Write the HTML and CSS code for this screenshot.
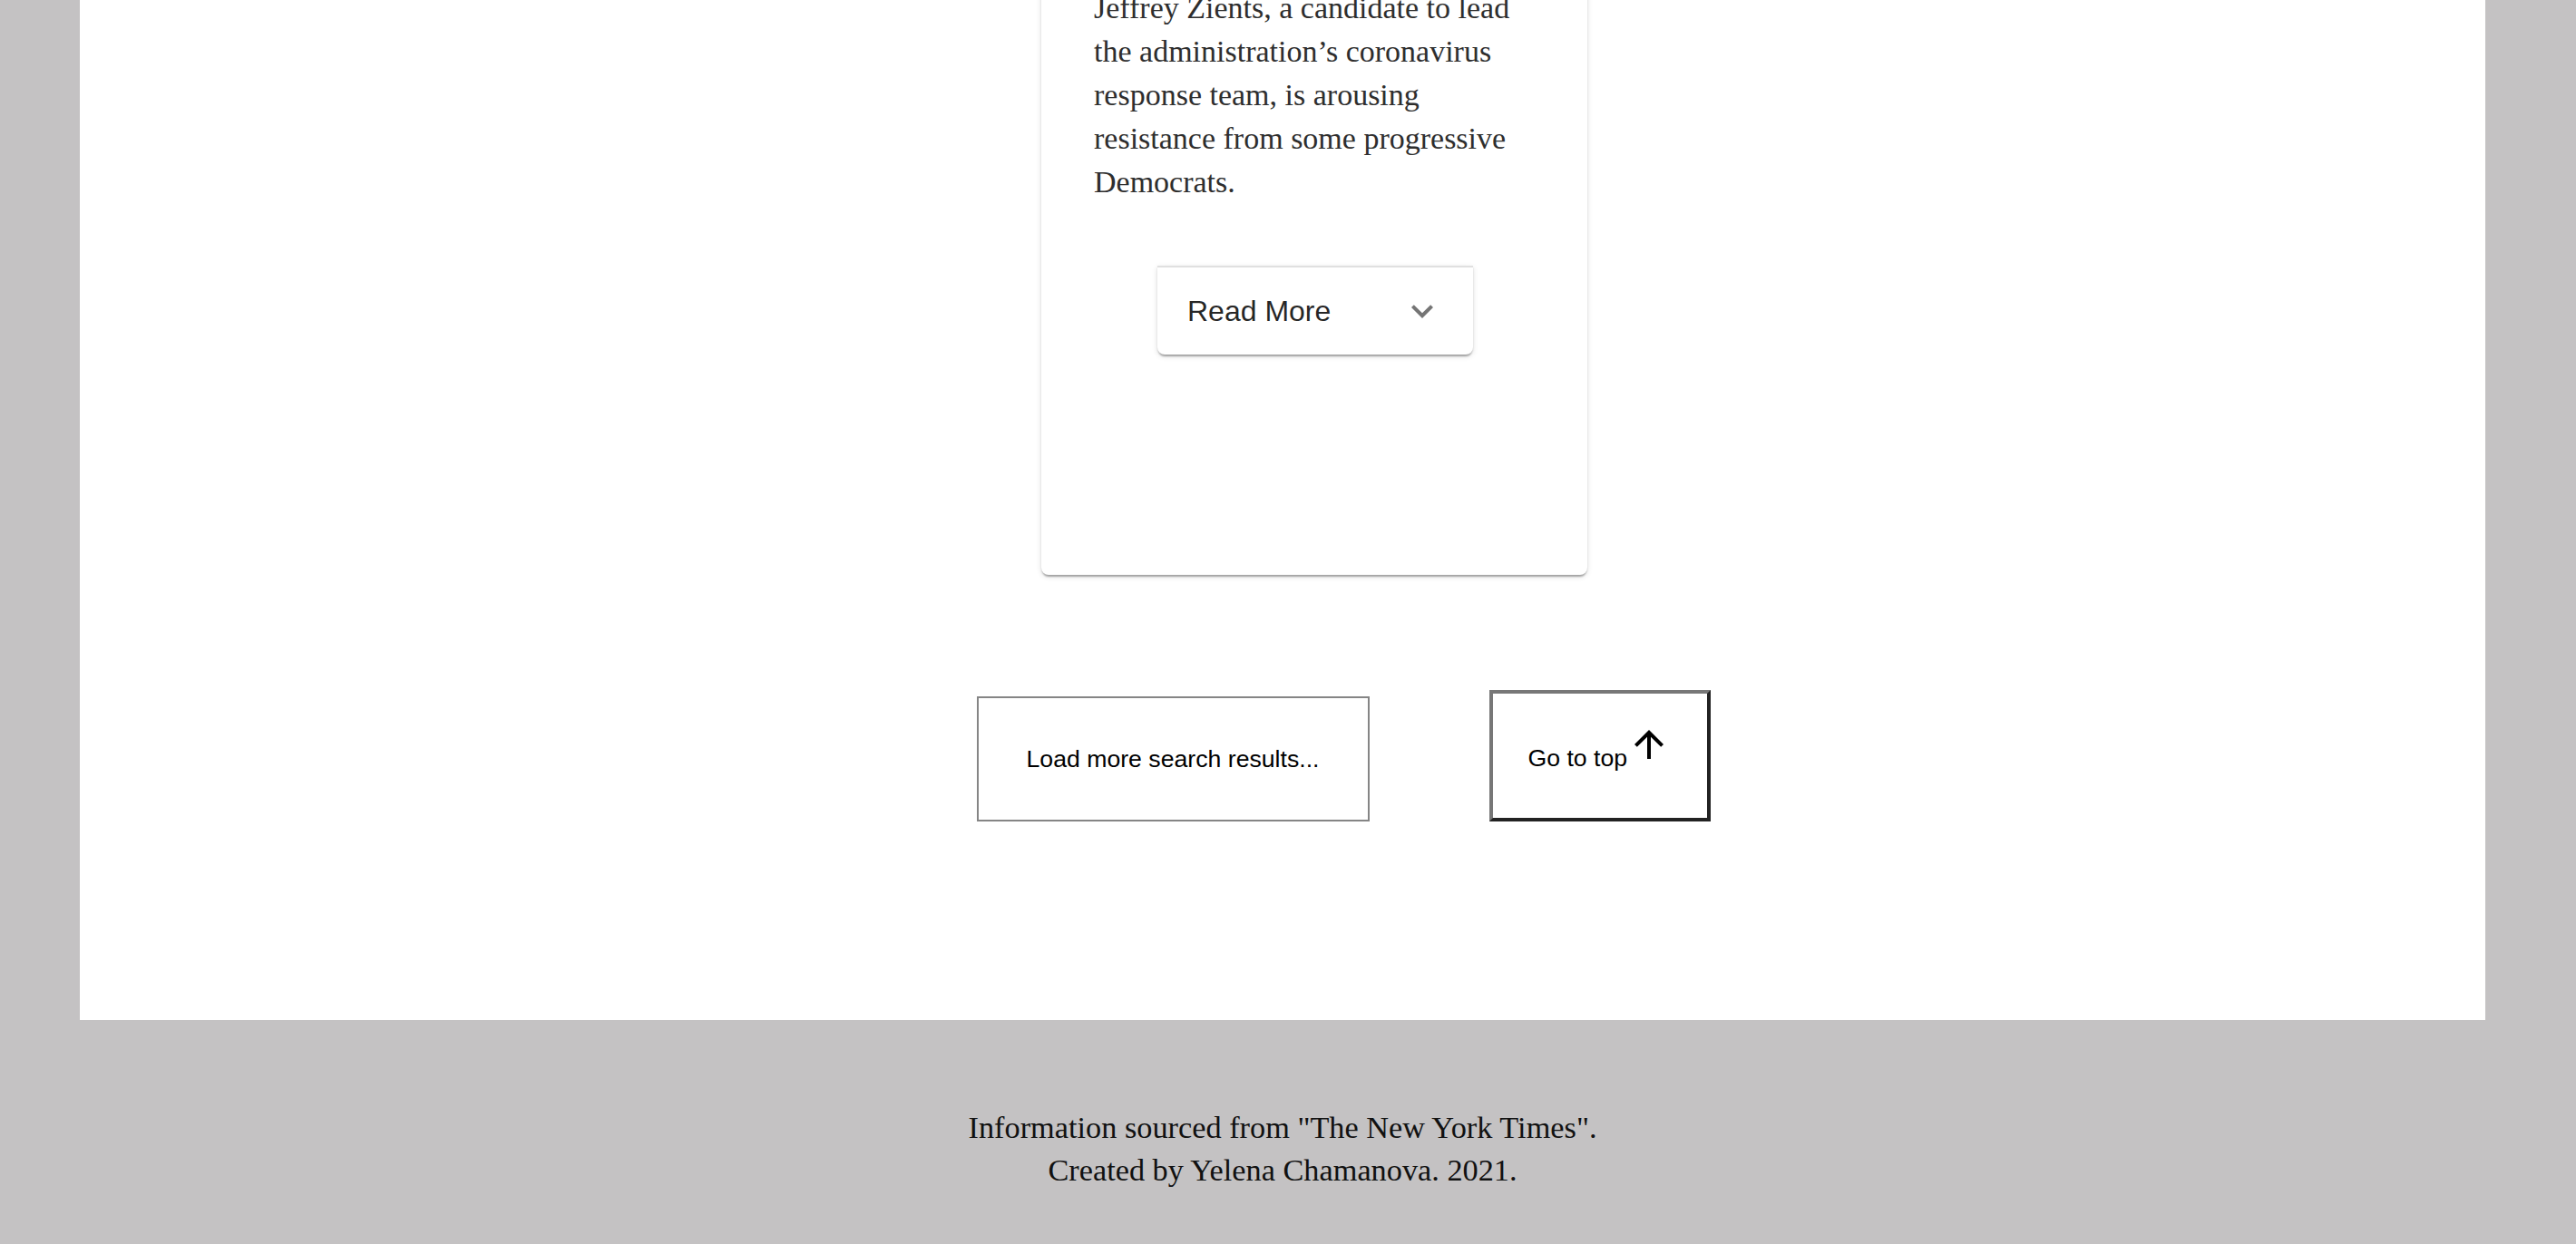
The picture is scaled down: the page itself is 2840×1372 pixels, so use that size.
FILE: index.html
```html
<!DOCTYPE html>
<html lang="en">
<head>
<meta charset="utf-8">
<title>Search results</title>
<link rel="stylesheet" href="styles.css">
</head>
<body>
<main class="main">
  <div class="card-row">
    <article class="card">
      <p class="abstract">Jeffrey Zients, a candidate to lead the administration’s coronavirus response team, is arousing resistance from some progressive Democrats.</p>
      <div class="accordion">
        <span class="acc-label">Read More</span>
        <span class="acc-icon">
          <svg viewBox="0 0 24 24" width="48" height="48"><path d="M16.59 8.59L12 13.17 7.41 8.59 6 10l6 6 6-6z" fill="currentColor"/></svg>
        </span>
      </div>
    </article>
  </div>
  <div class="actions">
    <button class="btn-load">Load more search results...</button>
    <button class="btn-top">Go to top<svg class="arrow" viewBox="0 0 24 24" width="48" height="48"><path d="M4 12l1.41 1.41L11 7.83V20h2V7.83l5.58 5.59L20 12l-8-8-8 8z" fill="currentColor"/></svg></button>
  </div>
</main>
<footer class="footer">
  <p>Information sourced from "The New York Times".</p>
  <p>Created by Yelena Chamanova. 2021.</p>
</footer>
</body>
</html>
```

FILE: styles.css
```css
html, body {
  margin: 0;
  padding: 0;
}
body {
  background: #c4c2c3;
  font-family: "Liberation Serif", "Times New Roman", serif;
  overflow: hidden;
}
.main {
  background: #ffffff;
  margin-left: 88px;
  width: 2652px;
  margin-top: -60px;
  padding-bottom: 219px;
}
.card-row {
  display: flex;
  justify-content: center;
  padding-left: 70px;
}
.card {
  width: 602px;
  box-sizing: border-box;
  background: #fff;
  border-radius: 8px;
  box-shadow: 0 4px 2px -2px rgba(0,0,0,0.2), 0 2px 2px 0 rgba(0,0,0,0.14), 0 2px 6px 0 rgba(0,0,0,0.12);
  padding: 45px 56px 243px 58px;
  display: flex;
  flex-direction: column;
  align-items: center;
}
.abstract {
  margin: 0;
  width: 488px;
  font-size: 34px;
  line-height: 48px;
  color: #2e2e2e;
  align-self: flex-start;
}
.accordion {
  margin-top: 68px;
  width: 348px;
  height: 98px;
  box-sizing: border-box;
  border-top: 2px solid rgba(0,0,0,0.12);
  border-radius: 0 0 8px 8px;
  background: #fff;
  box-shadow: 0 4px 2px -2px rgba(0,0,0,0.2), 0 2px 2px 0 rgba(0,0,0,0.14), 0 2px 6px 0 rgba(0,0,0,0.12);
  display: flex;
  align-items: center;
  padding: 0 32px 0 33px;
  font-family: "Liberation Sans", Arial, sans-serif;
}
.acc-label {
  flex: 1;
  font-size: 32px;
  color: rgba(0,0,0,0.87);
}
.acc-icon {
  display: flex;
  padding: 24px;
  margin-right: -24px;
  color: rgba(0,0,0,0.54);
}
.acc-icon svg {
  display: block;
}
.actions {
  display: flex;
  justify-content: center;
  align-items: flex-end;
  margin-top: 127px;
}
.btn-load {
  margin: 0 0 0 134px;
  width: 433px;
  height: 138px;
  box-sizing: border-box;
  background: #fff;
  border: 2px solid #858585;
  font-family: "Liberation Sans", Arial, sans-serif;
  font-size: 26.67px;
  color: #000;
  padding: 0;
  text-align: center;
}
.btn-top {
  margin: 0 0 0 132px;
  width: 244px;
  height: 145px;
  box-sizing: border-box;
  background: #fff;
  border: 4px solid;
  border-color: #777 #222 #222 #777;
  font-family: "Liberation Sans", Arial, sans-serif;
  font-size: 26.67px;
  color: #000;
  padding: 32px 0 0 39px;
  text-align: left;
  display: flex;
  align-items: baseline;
  align-self: flex-end;
}
.arrow {
  display: inline-block;
  flex: none;
  vertical-align: baseline;
  margin-bottom: -4px;
}
.footer {
  margin-left: 88px;
  width: 2652px;
  padding-top: 95px;
  text-align: center;
  font-size: 34.3px;
  line-height: 47px;
  color: #111;
}
.footer p {
  margin: 0;
}
```
